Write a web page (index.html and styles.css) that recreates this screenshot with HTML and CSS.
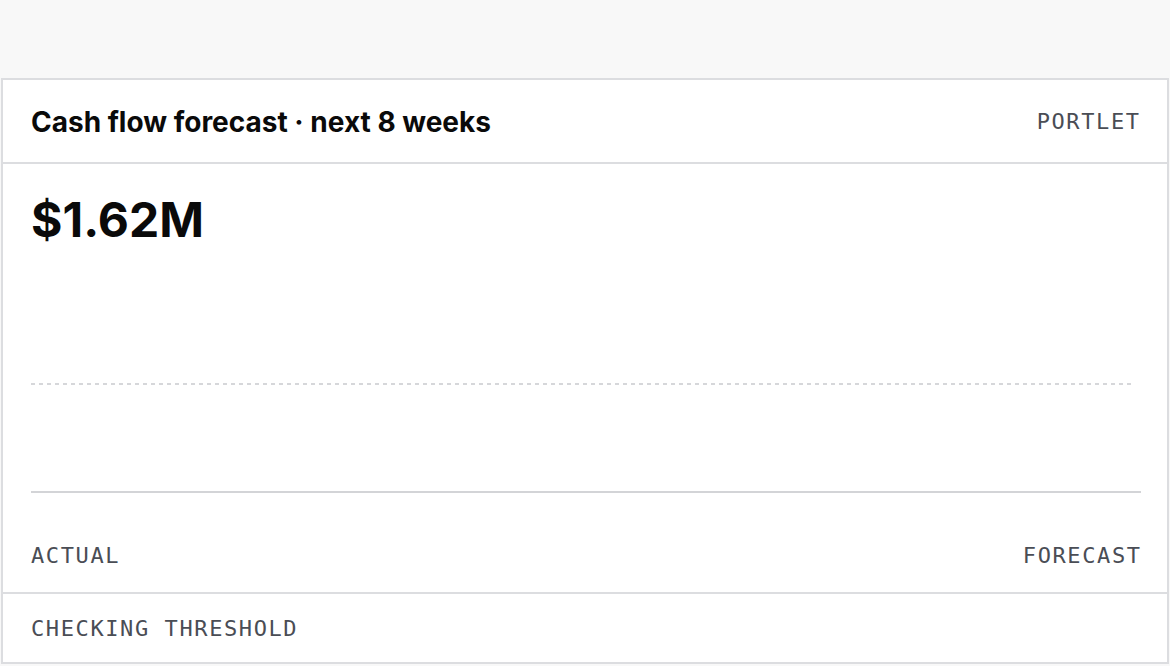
FILE: index.html
```html
<!DOCTYPE html>
<html lang="en">
<head>
<meta charset="utf-8">
<title>Cash flow forecast</title>
<link rel="stylesheet" href="styles.css">
</head>
<body>
<div class="page">
  <section class="card">
    <header class="card-head">
      <h2 class="card-title">Cash flow forecast · next 8 weeks</h2>
      <span class="tag">PORTLET</span>
    </header>
    <div class="card-body">
      <div class="value">$1.62M</div>
      <div class="chart">
        <div class="threshold-line"></div>
        <div class="baseline"></div>
      </div>
      <div class="legend">
        <span class="tag">ACTUAL</span>
        <span class="tag">FORECAST</span>
      </div>
    </div>
    <footer class="card-foot">
      <span class="tag">CHECKING THRESHOLD</span>
    </footer>
  </section>
</div>
</body>
</html>
```

FILE: styles.css
```css
* { box-sizing: border-box; }
html, body { margin: 0; padding: 0; }
body {
  background: #f8f8f8;
  font-family: "Inter", "Liberation Sans", sans-serif;
  color: #0a0a0a;
}
.page {
  padding: 78px 1px 0 1px;
}
.card {
  background: #ffffff;
  border: 2px solid #dcdde0;
}
.card-head {
  height: 84px;
  padding: 0 28px 0 28px;
  display: flex;
  align-items: center;
  justify-content: space-between;
  border-bottom: 2px solid #dcdde0;
}
.card-title {
  margin: 0;
  font-size: 28px;
  font-weight: 700;
  letter-spacing: 0;
  padding-top: 2px;
}
.tag {
  font-family: "DejaVu Sans Mono", "Liberation Mono", monospace;
  font-size: 22px;
  letter-spacing: 1.6px;
  color: #4a4d55;
  margin-right: -1.6px;
}
.card-body {
  padding: 28px 26px 0 28px;
}
.value {
  font-size: 48px;
  font-weight: 700;
  line-height: 56px;
  letter-spacing: 0;
}
.chart {
  display: block;
}
.threshold-line {
  margin-top: 135px;
  margin-right: 6px;
  height: 2px;
  background-image: linear-gradient(to right, #d6d7da 50%, transparent 50%);
  background-size: 8px 2px;
  background-repeat: repeat-x;
}
.baseline {
  margin-top: 106px;
  height: 2px;
  background: #d3d4d7;
}
.legend {
  display: flex;
  justify-content: space-between;
  align-items: center;
  height: 99px;
  padding-top: 25px;
  margin-right: 1px;
}
.card-foot {
  border-top: 2px solid #dcdde0;
  height: 70px;
  padding: 0 28px;
  display: flex;
  align-items: center;
}
```
